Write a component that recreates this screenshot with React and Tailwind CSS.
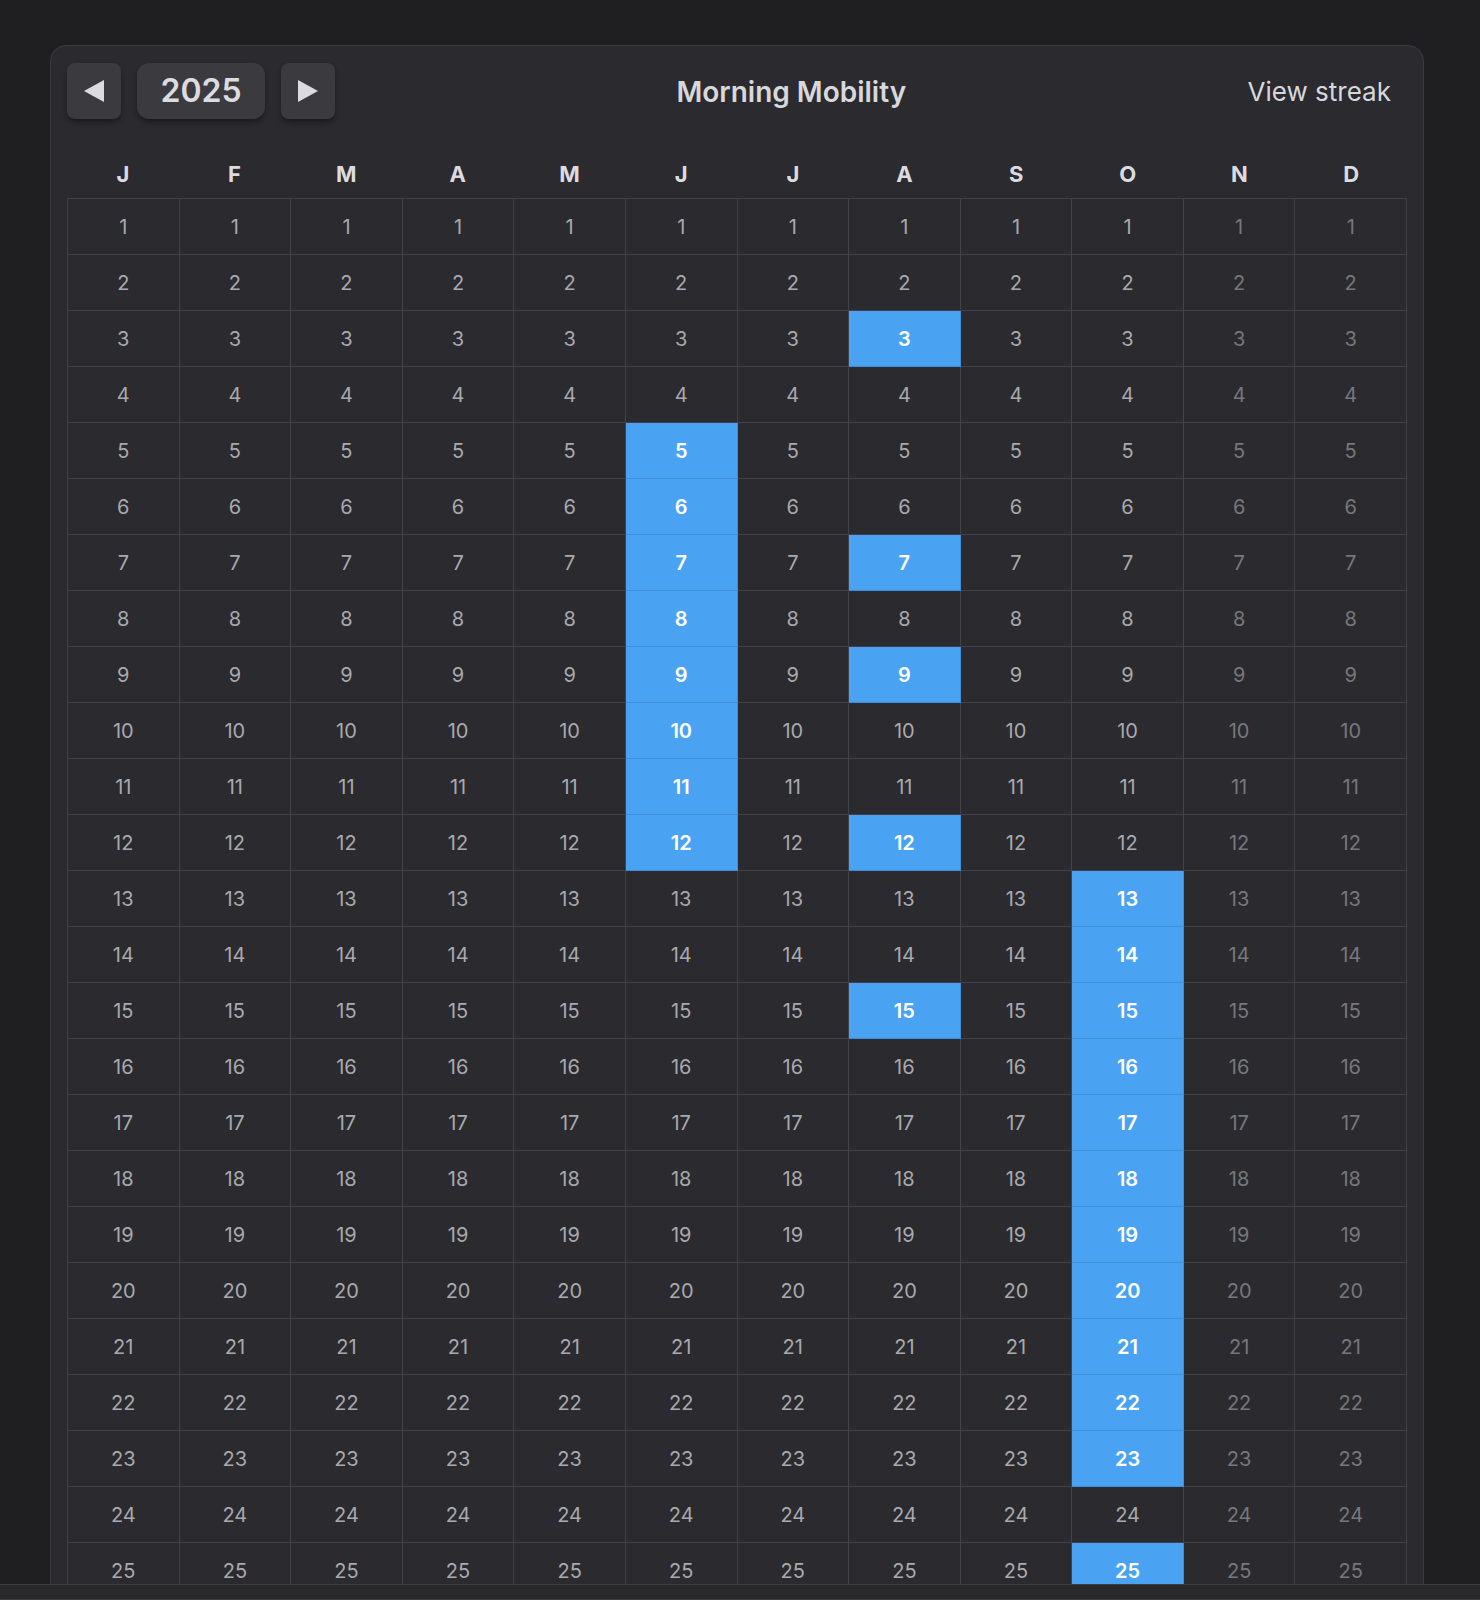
import React from "react";

const MONTHS = ["J", "F", "M", "A", "M", "J", "J", "A", "S", "O", "N", "D"];
const DAYS_IN = [31, 28, 31, 30, 31, 30, 31, 31, 30, 31, 30, 31];
const HIGHLIGHT = {
  5: [5, 6, 7, 8, 9, 10, 11, 12],
  7: [3, 7, 9, 12, 15],
  9: [13, 14, 15, 16, 17, 18, 19, 20, 21, 22, 23, 25],
};

function Tri({ dir }) {
  return (
    <svg width="20" height="22" viewBox="0 0 20 22">
      {dir === "left" ? (
        <polygon points="20,0 20,22 0,11" fill="#dcdce0" />
      ) : (
        <polygon points="0,0 0,22 20,11" fill="#dcdce0" />
      )}
    </svg>
  );
}

export default function App() {
  const cells = [];
  for (let d = 1; d <= 31; d++) {
    for (let m = 0; m < 12; m++) {
      const exists = d <= DAYS_IN[m];
      const hl = exists && HIGHLIGHT[m] && HIGHLIGHT[m].includes(d);
      const future = m >= 10;
      let cls =
        "h-[56px] flex items-center justify-center border-r border-b text-[20px] ";
      if (hl) {
        cls += "bg-[#4aa3f2] border-[#3f8ed6] text-white font-semibold";
      } else if (future) {
        cls += "border-[#414147] text-[#77777d]";
      } else {
        cls += "border-[#414147] text-[#a9a9ae]";
      }
      cells.push(
        <div key={`${d}-${m}`} className={cls}>
          {exists ? d : ""}
        </div>
      );
    }
  }

  return (
    <div className="h-[1600px] w-full bg-[#1f1f22] flex flex-col overflow-hidden font-['Inter',sans-serif]">
      <div className="flex-1 overflow-hidden pt-[45px] pl-[50px] pr-[56px]">
        <div className="rounded-2xl border border-[#3a3a3f] bg-[#2a2a2f] px-4 pt-[17px] pb-8">
          <div className="flex items-center justify-between h-[56px]">
            <div className="flex items-center gap-4">
              <button className="w-[54px] h-[56px] rounded-lg bg-[#3a3a3f] flex items-center justify-center shadow-md shadow-black/30">
                <Tri dir="left" />
              </button>
              <button className="w-[128px] h-[56px] rounded-xl bg-[#3a3a3f] flex items-center justify-center text-[32px] font-semibold text-[#dcdce0] shadow-md shadow-black/30">
                2025
              </button>
              <button className="w-[54px] h-[56px] rounded-lg bg-[#3a3a3f] flex items-center justify-center shadow-md shadow-black/30">
                <Tri dir="right" />
              </button>
            </div>
            <div className="text-[28px] font-semibold text-[#d8d8dc] pt-[1px]">Morning Mobility</div>
            <div className="text-[26px] text-[#d8d8dc] pr-[16px] pt-[1px]">View streak</div>
          </div>
          <div className="mt-[31px] grid grid-cols-12 h-[48px]">
            {MONTHS.map((m, i) => (
              <div key={i} className="flex items-center justify-center text-[22px] font-bold text-[#dcdce0]">
                {m}
              </div>
            ))}
          </div>
          <div className="grid grid-cols-12 border-t border-l border-[#414147]">{cells}</div>
        </div>
      </div>
      <div className="h-[16px] shrink-0 bg-[#28282b] border-t border-b border-[#3b3b3e]" />
    </div>
  );
}
